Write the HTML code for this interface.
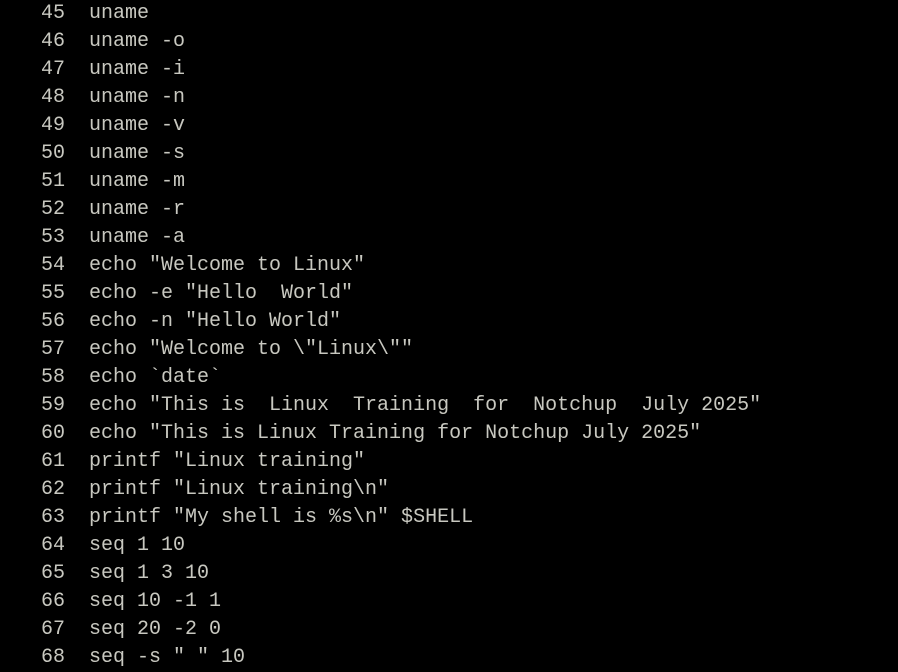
<!DOCTYPE html>
<html><head><meta charset="utf-8"><style>
html,body{margin:0;padding:0;background:#000;width:898px;height:669px;overflow:hidden}
pre{margin:0;position:absolute;left:29px;top:0px;font-family:"Liberation Mono",monospace;font-size:20px;line-height:28px;color:#c8c8c0;white-space:pre}
</style></head><body><pre> 45  uname
 46  uname -o
 47  uname -i
 48  uname -n
 49  uname -v
 50  uname -s
 51  uname -m
 52  uname -r
 53  uname -a
 54  echo "Welcome to Linux"
 55  echo -e "Hello  World"
 56  echo -n "Hello World"
 57  echo "Welcome to \"Linux\""
 58  echo `date`
 59  echo "This is  Linux  Training  for  Notchup  July 2025"
 60  echo "This is Linux Training for Notchup July 2025"
 61  printf "Linux training"
 62  printf "Linux training\n"
 63  printf "My shell is %s\n" $SHELL
 64  seq 1 10
 65  seq 1 3 10
 66  seq 10 -1 1
 67  seq 20 -2 0
 68  seq -s " " 10</pre></body></html>
